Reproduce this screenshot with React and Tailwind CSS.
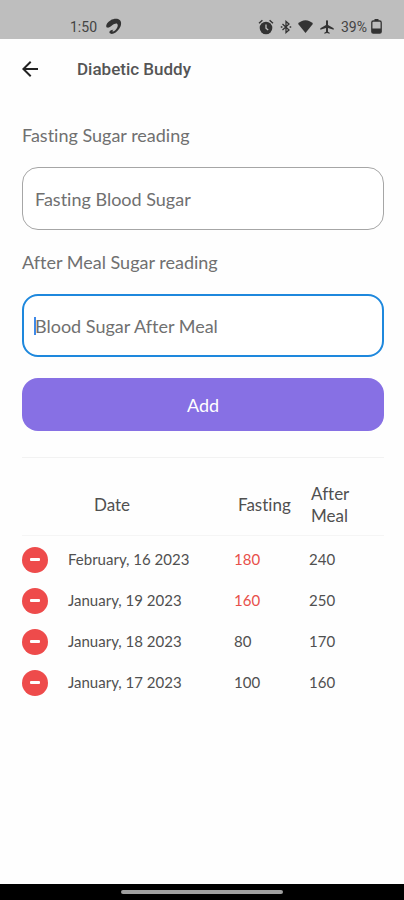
import React, { useState } from 'react';
import { MdAirplanemodeActive, MdArrowBack } from 'react-icons/md';

const HIGH_FASTING = 130;

const initialReadings = [
  { id: 1, date: 'February, 16 2023', fasting: 180, afterMeal: 240 },
  { id: 2, date: 'January, 19 2023', fasting: 160, afterMeal: 250 },
  { id: 3, date: 'January, 18 2023', fasting: 80, afterMeal: 170 },
  { id: 4, date: 'January, 17 2023', fasting: 100, afterMeal: 160 },
];

function AlarmIcon() {
  return (
    <svg width="16" height="16" viewBox="0 0 16 16" fill="none" aria-hidden="true">
      <circle cx="8" cy="9" r="6.3" fill="#333" />
      <path d="M1 4.200 4.400 1.300M15 4.200 11.600 1.300" stroke="#333" strokeWidth="1.4" />
      <path d="M8 5.600V9.200L10.200 11" stroke="#bebebe" strokeWidth="1.3" />
    </svg>
  );
}

function BluetoothIcon() {
  return (
    <svg width="12" height="14" viewBox="0 0 12 14" fill="none" stroke="#333" strokeWidth="1.3" aria-hidden="true">
      <path d="M2.500 4 9 10 6 12.600V1.400L9 4 2.500 10" />
      <path d="M.8 7h1.600M9.600 7h1.600" strokeWidth="1.600" />
    </svg>
  );
}

function CarrierIcon() {
  return (
    <svg width="18" height="17" viewBox="0 0 18 17" aria-hidden="true">
      <path
        d="M1.200 8.200C.9 6.500 2.800 3.900 5.400 2.400 8.500.600 12.700.300 14.700 2c2.200 1.900 1.700 5.700-.5 8.800-2 2.900-5 5.100-7.500 5.100-1.700 0-2.700-1-2.200-2.300.5-1.200 2.300-2.100 4-1.900-.9.700-1.300 1.300-.9 1.700.7.600 2.500-.7 3.700-2.400 1.300-1.900 2-4.200 1-5.100-1.100-.9-3.400.200-5.100 1.400C5.300 8.700 3.700 9.900 2.400 9.600 1.700 9.500 1.300 8.900 1.200 8.200Z"
        fill="#333"
      />
    </svg>
  );
}

function WifiIcon() {
  return (
    <svg width="15" height="13" viewBox="0 0 15 13" aria-hidden="true">
      <path d="M7.500 13 0 3.800C2 1.500 4.600.300 7.500.300S13 1.500 15 3.800Z" fill="#333" />
    </svg>
  );
}

function BatteryIcon() {
  return (
    <svg width="11" height="15" viewBox="0 0 11 15" aria-hidden="true">
      <path d="M3.500 0h4v2h-4z" fill="#333" />
      <rect x=".8" y="2" width="9.400" height="12.200" rx="1.500" fill="none" stroke="#333" strokeWidth="1.300" />
      <path d="M1 9.500h9v4.500H1z" fill="#333" />
    </svg>
  );
}

function StatusBar() {
  return (
    <div className="h-[39px] bg-[#bebebe] pl-[70px] pr-[22px] pt-[14px] flex items-center justify-between text-[#444] font-[Roboto,sans-serif] text-sm">
      <div className="flex items-center gap-2">
        <span>1:50</span>
        <CarrierIcon />
      </div>
      <div className="flex items-center gap-[6px]">
        <AlarmIcon />
        <BluetoothIcon />
        <WifiIcon />
        <MdAirplanemodeActive size={16} className="text-[#333]" />
        <div className="flex items-center gap-1">
          <span>39%</span>
          <BatteryIcon />
        </div>
      </div>
    </div>
  );
}

function ReadingField({ id, label, placeholder, value, onChange, active }) {
  return (
    <div>
      <label htmlFor={id} className="block h-6 leading-6 mb-5 text-[#707070]">{label}</label>
      <div className="relative">
        <input
          id={id}
          type="text"
          inputMode="numeric"
          value={value}
          onChange={onChange}
          placeholder={placeholder}
          className={`block w-full h-[63px] rounded-2xl bg-white text-[#555] placeholder:text-[#707070] outline-none caret-[#2f86e0] ${
            active ? 'border-2 border-[#1e88dd] px-[11px]' : 'border border-[#a6a6a6] px-3'
          }`}
        />
        {active && !value && (
          <span className="absolute left-3 inset-y-0 my-auto h-[18px] w-[2px] bg-[#3f8ae8] pointer-events-none" />
        )}
      </div>
    </div>
  );
}

export default function App() {
  const [fasting, setFasting] = useState('');
  const [afterMeal, setAfterMeal] = useState('');
  const [readings, setReadings] = useState(initialReadings);

  const handleAdd = (e) => {
    e.preventDefault();
    if (!fasting || !afterMeal) return;
    const now = new Date();
    const month = now.toLocaleDateString('en-US', { month: 'long' });
    const date = `${month}, ${now.getDate()} ${now.getFullYear()}`;
    setReadings([{ id: now.getTime(), date, fasting: Number(fasting), afterMeal: Number(afterMeal) }, ...readings]);
    setFasting('');
    setAfterMeal('');
  };

  const handleRemove = (id) => setReadings(readings.filter((r) => r.id !== id));

  return (
    <div className="min-h-screen flex flex-col bg-[#fefefe] font-[Lato,sans-serif] text-lg [font-variant-ligatures:none]">
      <StatusBar />

      {/* App bar */}
      <header className="h-[60px] px-[18px] flex items-center gap-[35px] text-[#555]">
        <button type="button" aria-label="Back" className="text-[#222] cursor-pointer">
          <MdArrowBack size={24} />
        </button>
        <h1 className="font-[Roboto,sans-serif] text-[17px] font-medium">Diabetic Buddy</h1>
      </header>

      <main className="flex-1 pl-[22px] pr-5 pt-6">
        <form onSubmit={handleAdd}>
          <div className="flex flex-col gap-5">
            <ReadingField
              id="fasting"
              label="Fasting Sugar reading"
              placeholder="Fasting Blood Sugar"
              value={fasting}
              onChange={(e) => setFasting(e.target.value)}
            />
            <ReadingField
              id="after-meal"
              label="After Meal Sugar reading"
              placeholder="Blood Sugar After Meal"
              value={afterMeal}
              onChange={(e) => setAfterMeal(e.target.value)}
              active
            />
            <button type="submit" className="h-[53px] mt-px rounded-2xl bg-[#8770e4] text-white cursor-pointer">
              Add
            </button>
          </div>
        </form>

        {/* Readings */}
        <table className="mt-[26px] w-full table-fixed border-t border-[#f2f2f2] text-left text-[#505050]">
          <colgroup>
            <col className="w-[46px]" />
            <col />
            <col className="w-[75px]" />
            <col className="w-[75px]" />
          </colgroup>
          <thead>
            <tr className="h-[78px] border-b border-[#f5f5f5] leading-[22px] text-[17px]">
              <td />
              <th className="pl-[26px] pt-4 font-normal">Date</th>
              <th className="pl-1 pt-4 font-normal">Fasting</th>
              <th className="pl-[2px] pr-6 pt-4 font-normal">After Meal</th>
            </tr>
          </thead>
          <tbody className="text-[15px] before:block before:h-[3px]">
            {readings.map((r) => (
              <tr key={r.id} className="h-[41px]">
                <td>
                  <button
                    type="button"
                    aria-label={`Remove ${r.date}`}
                    onClick={() => handleRemove(r.id)}
                    className="size-[26px] rounded-full bg-[#ee4b4b] flex items-center justify-center cursor-pointer"
                  >
                    <span className="w-[10px] h-[3px] rounded-[1px] bg-white" />
                  </button>
                </td>
                <td>{r.date}</td>
                <td className={r.fasting > HIGH_FASTING ? 'text-[#e8504a]' : ''}>{r.fasting}</td>
                <td>{r.afterMeal}</td>
              </tr>
            ))}
          </tbody>
        </table>
      </main>

      {/* Gesture bar */}
      <footer className="h-4 bg-black flex items-center justify-center">
        <div className="w-2/5 h-1 rounded-full bg-[#a0a0a0]" />
      </footer>
    </div>
  );
}
